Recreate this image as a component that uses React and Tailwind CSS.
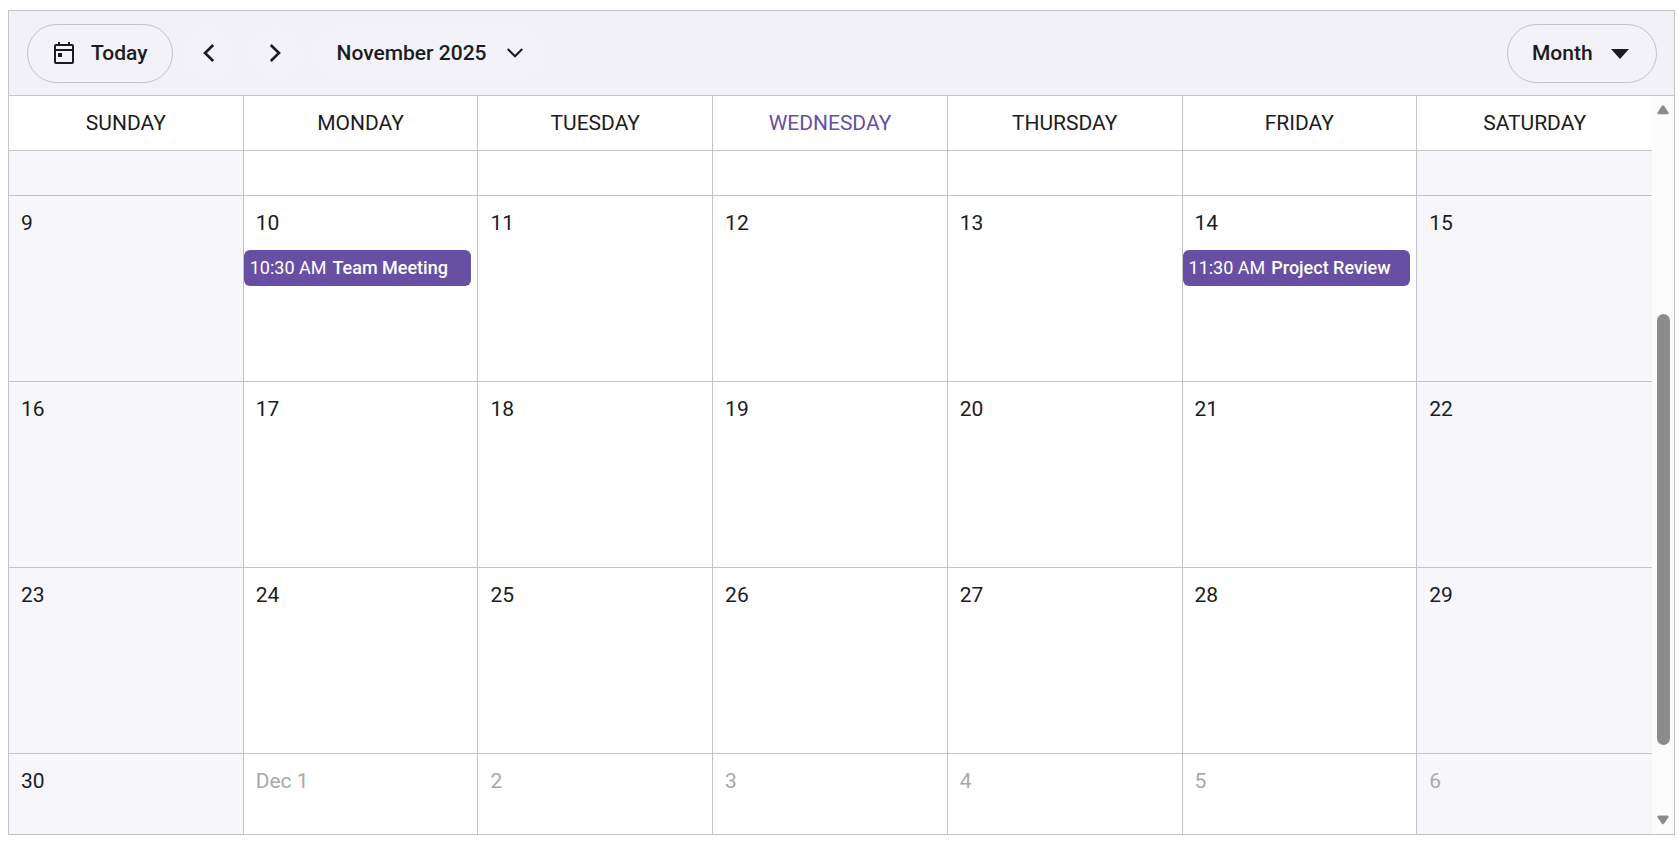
import { useState } from "react";

const DAYS = ["SUNDAY", "MONDAY", "TUESDAY", "WEDNESDAY", "THURSDAY", "FRIDAY", "SATURDAY"];
const TODAY = "WEDNESDAY";

const WEEKS = [
    { size: "h-[45px]", days: ["", "", "", "", "", "", ""] },
    { size: "h-[186px]", days: ["9", "10", "11", "12", "13", "14", "15"] },
    { size: "h-[186px]", days: ["16", "17", "18", "19", "20", "21", "22"] },
    { size: "h-[186px]", days: ["23", "24", "25", "26", "27", "28", "29"] },
    { size: "h-[80px]", days: ["30", "Dec 1", "2", "3", "4", "5", "6"], last: true },
];

const EVENTS = {
    "10": { time: "10:30 AM", title: "Team Meeting" },
    "14": { time: "11:30 AM", title: "Project Review" },
};

export default function App(){
    return (
        <div className="pt-[10px] pl-2 pr-[3px] font-[Roboto,sans-serif] text-[21px] leading-6 text-[#1c1b1f]">
            <div className="border border-[#c4c4c4] bg-white">
                <Toolbar/>
                <div className="flex">
                    <MonthTable/>
                    <ScrollBar/>
                </div>
            </div>
        </div>
    )
}

function Toolbar(){
    const [view, setView] = useState("Month");

    return <div className="flex items-center justify-between h-[85px] pl-[18px] pr-[17px] pt-px bg-[#f2f1f8] border-b border-[#c4c4c4]">
        <div className="flex items-center gap-[6px] font-medium">
            <button className="flex items-center gap-[17px] h-[59px] pl-[26px] pr-6 pb-[2px] rounded-full border border-[#c4c4c4] bg-[#f3f2f8]">
                <CalendarIcon/>
                Today
            </button>
            <button aria-label="Previous" className="flex items-center justify-center w-[60px] h-[59px] pb-[2px] rounded-full bg-[#f3f2f8]">
                <svg width="12" height="18" viewBox="0 0 12 18" fill="none" stroke="currentColor" strokeWidth="2.6"><path d="M10.2 1 2 9l8.2 8"/></svg>
            </button>
            <button aria-label="Next" className="flex items-center justify-center w-[60px] h-[59px] pb-[2px] rounded-full bg-[#f3f2f8]">
                <svg width="12" height="18" viewBox="0 0 12 18" fill="none" stroke="currentColor" strokeWidth="2.6"><path d="M1.8 1 10 9l-8.2 8"/></svg>
            </button>
            <button aria-haspopup="true" className="flex items-center gap-5 h-[59px] px-[26px] pb-[2px] rounded-full bg-[#f3f2f8]">
                November 2025
                <svg width="16" height="10" viewBox="0 0 16 10" fill="none" stroke="currentColor" strokeWidth="2"><path d="M.7 1 8 8.3 15.3 1"/></svg>
            </button>
        </div>
        <label className="relative flex items-center font-medium">
            <select aria-label="View" value={view} onChange={(e) => setView(e.target.value)} className="appearance-none w-[150px] h-[59px] pl-6 pb-[2px] rounded-full border border-[#c4c4c4] bg-[#f3f2f8]">
                <option>Day</option>
                <option>Week</option>
                <option>Month</option>
            </select>
            <svg className="absolute right-7 pointer-events-none" width="18" height="10" viewBox="0 0 18 10" fill="currentColor"><path d="M0 0h18L9 10z"/></svg>
        </label>
    </div>
}

function MonthTable(){
    return <div className="flex-1">
        <table className="w-full table-fixed border-separate border-spacing-0">
            <thead>
                <tr>
                    {DAYS.map((day, i) => (
                        <th key={day} scope="col" className={`h-[55px] p-0 font-normal border-b border-[#c4c4c4] ${i < 6 ? "border-r" : ""} ${day == TODAY ? "text-[#6750a4]" : ""}`}>{day}</th>
                    ))}
                </tr>
            </thead>
            <tbody>
                {WEEKS.map((week, w) => (
                    <tr key={w}>
                        {week.days.map((day, i) => (
                            <td key={i} className={`${week.size} p-0 pt-[15px] align-top border-[#c4c4c4] ${i < 6 ? "border-r" : ""} ${week.last ? "" : "border-b"} ${i == 0 || i == 6 ? "bg-[#f7f6fb]" : ""}`}>
                                {day && <div className={`pl-3 ${week.last && i > 0 ? "text-[#a9a9ab]" : ""}`}>{day}</div>}
                                {EVENTS[day] && <EventCard event={EVENTS[day]}/>}
                            </td>
                        ))}
                    </tr>
                ))}
            </tbody>
        </table>
    </div>
}

function EventCard({ event }){
    return <div className="flex items-center gap-[6px] h-9 mt-[15px] mr-[6px] px-[6px] rounded-md bg-[#6750a4] text-white text-[18px] whitespace-nowrap">
        <span>{event.time}</span>
        <span className="font-medium">{event.title}</span>
    </div>
}

function ScrollBar(){
    return <div className="flex flex-col items-center w-[22px] pt-[9px] pb-[9px] bg-[#fcfcfc] text-[#8b8b8b]">
        <svg width="12" height="10" viewBox="0 0 12 10" fill="currentColor"><path d="M4.8 1Q6-.6 7.2 1l4.3 6.6Q12 9.3 10.4 9.3H1.6Q0 9.3.5 7.6z"/></svg>
        <div className="mt-[199px] mb-auto w-[13px] h-[431px] rounded-full bg-[#8b8b8b]"></div>
        <svg width="12" height="10" viewBox="0 0 12 10" fill="currentColor"><path d="M4.8 8.6q1.2 1.6 2.4 0l4.3-6.4Q12 .5 10.4.5H1.6Q0 .5.5 2.2z"/></svg>
    </div>
}

function CalendarIcon(){
    return <svg width="20" height="22" viewBox="0 0 20 22" fill="none" stroke="currentColor" strokeWidth="2">
        <rect x="1" y="3" width="18" height="18" rx="1"/>
        <path d="M1 8h18M5 0v3M15 0v3"/>
        <rect x="4" y="11" width="4" height="4" fill="currentColor" stroke="none"/>
    </svg>
}
